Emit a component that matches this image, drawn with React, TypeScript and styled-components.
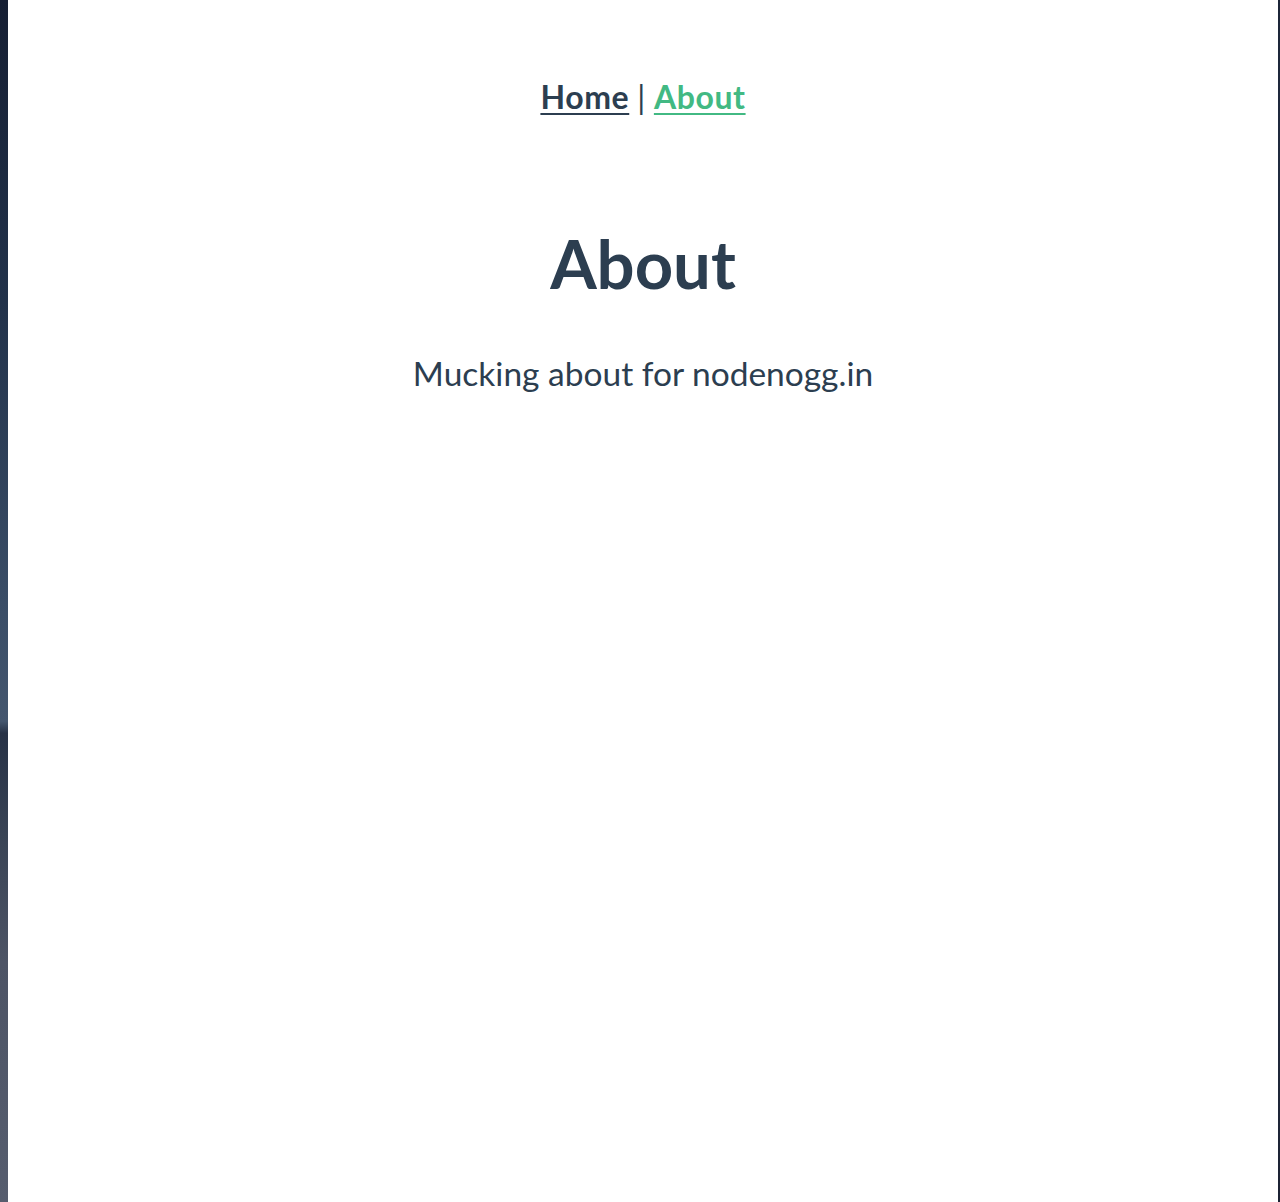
import React from "react";
import styled, { createGlobalStyle } from "styled-components";

const Global = createGlobalStyle`
  html, body { margin: 0; padding: 0; background: #fff; }
  #root { min-height: 1202px; }
`;

const Frame = styled.div`
  display: flex;
  min-height: 1202px;
  background: #fff;
`;

const LeftEdge = styled.div`
  width: 8px;
  flex: none;
  background: linear-gradient(
    180deg,
    #161f33 0%,
    #22324a 25%,
    #3a4d66 50%,
    #44566e 60%,
    #273246 61%,
    #3a4455 70%,
    #4d5465 80%,
    #565d6e 100%
  );
`;

const RightEdge = styled.div`
  width: 2px;
  flex: none;
  background: linear-gradient(180deg, #1c2538 0%, #2b3950 50%, #1c2233 100%);
`;

const Main = styled.div`
  flex: 1;
  font-family: Lato, "Noto Sans", sans-serif;
  color: #2c3e50;
  text-align: center;
  -webkit-font-smoothing: antialiased;
`;

const Nav = styled.nav`
  padding: 74px 0 0;
  font-size: 32px;
  font-weight: 700;
  line-height: 46px;
  letter-spacing: 0.6px;
`;

const NavLink = styled.a<{ $active?: boolean }>`
  color: ${(p) => (p.$active ? "#42b983" : "#2c3e50")};
  text-decoration: underline;
  text-decoration-thickness: 2px;
  text-underline-offset: 4px;
`;

const Sep = styled.span`
  font-weight: 400;
  margin: 0 8px;
`;

const Title = styled.h1`
  margin: 103px 0 0;
  font-size: 67px;
  font-weight: 700;
  line-height: 80px;
`;

const Text = styled.p`
  margin: 48px 0 0;
  font-size: 33.5px;
  font-weight: 400;
  line-height: 44px;
`;

export default function App() {
  return (
    <>
      <Global />
      <Frame>
        <LeftEdge />
        <Main>
          <Nav>
            <NavLink href="#">Home</NavLink>
            <Sep>|</Sep>
            <NavLink href="#" $active>
              About
            </NavLink>
          </Nav>
          <Title>About</Title>
          <Text>Mucking about for nodenogg.in</Text>
        </Main>
        <RightEdge />
      </Frame>
    </>
  );
}
